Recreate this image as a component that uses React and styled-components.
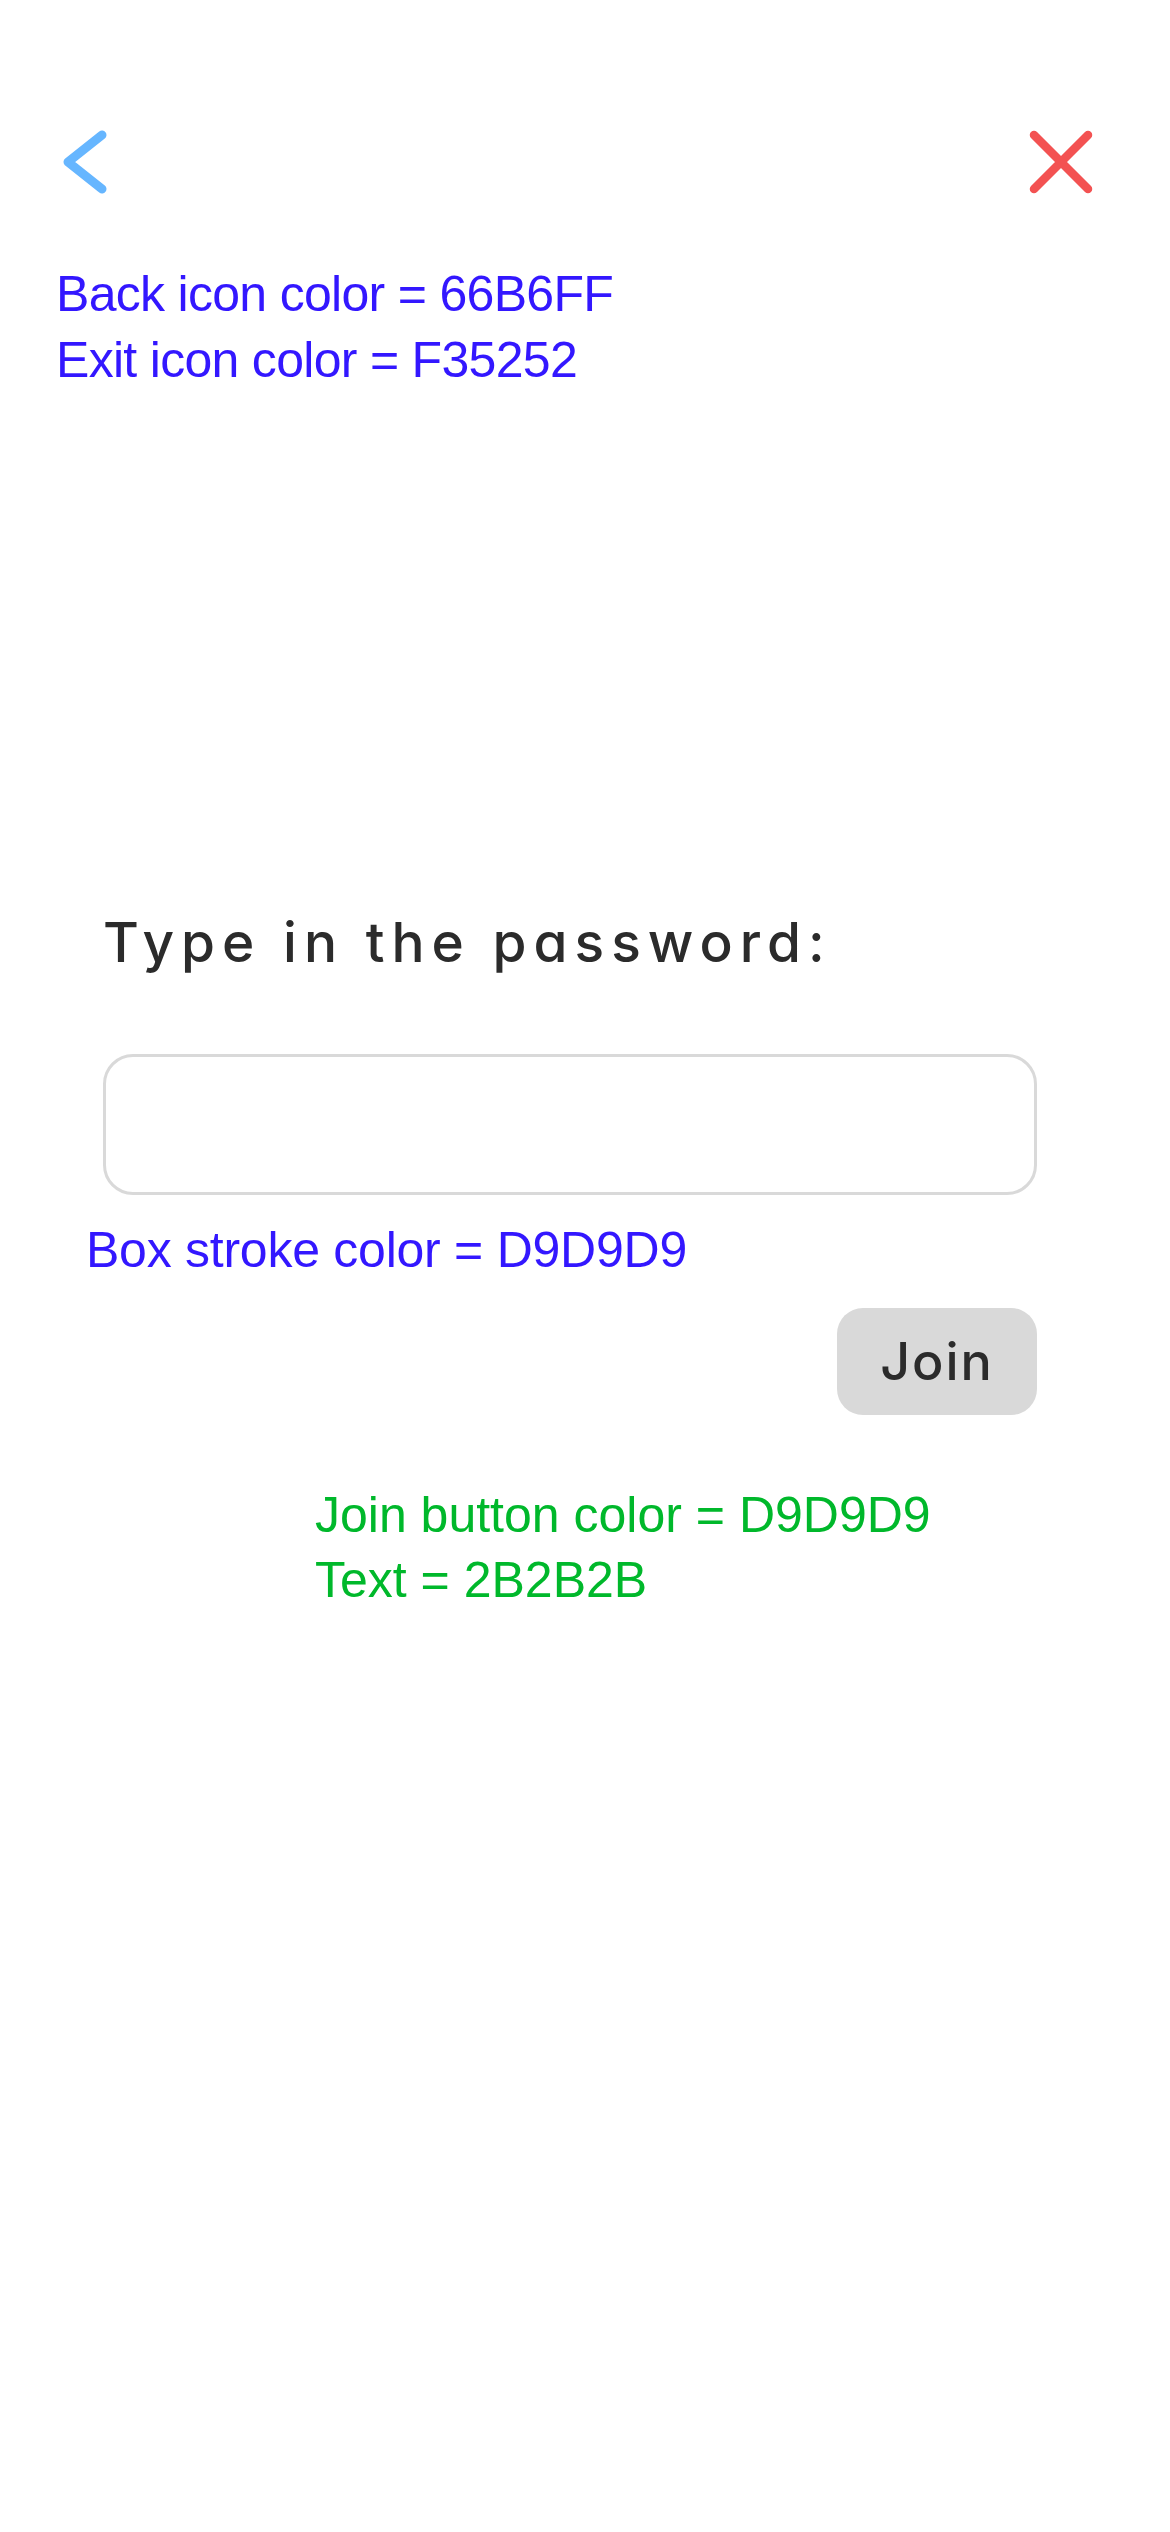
import React from "react";
import styled, { createGlobalStyle } from "styled-components";

const Global = createGlobalStyle`
  html, body { margin: 0; padding: 0; background: #ffffff; }
  body { font-family: "Liberation Sans", Arial, sans-serif; }
  * { box-sizing: border-box; }
`;

const Page = styled.div`
  width: 1170px;
  min-height: 2532px;
  background: #ffffff;
  display: flex;
  flex-direction: column;
`;

const Header = styled.header`
  display: flex;
  justify-content: space-between;
  align-items: flex-start;
  padding: 125px 69px 0 58px;
  height: 200px;
`;

const IconButton = styled.button`
  border: none;
  background: transparent;
  padding: 0;
  margin: 0;
  display: block;
  cursor: pointer;
  line-height: 0;
`;

const Note = styled.p`
  margin: ${(p) => p.$top}px 0 0 ${(p) => p.$left}px;
  font-family: "Liberation Sans", Arial, sans-serif;
  font-size: 50px;
  line-height: ${(p) => p.$lh || 66}px;
  letter-spacing: ${(p) => (p.$ls !== undefined ? p.$ls : -0.7)}px;
  color: ${(p) => p.$color};
  white-space: pre-line;
`;

const Form = styled.form`
  display: flex;
  flex-direction: column;
  margin: ${(p) => p.$top}px 0 0 103px;
  width: 934px;
`;

const Label = styled.label`
  font-family: "Inter", "DejaVu Sans", sans-serif;
  font-feature-settings: "cv11" 1;
  font-size: 55px;
  line-height: 66px;
  letter-spacing: 7px;
  color: #2b2b2b;
  font-weight: 500;
`;

const PasswordBox = styled.input`
  margin-top: 79px;
  width: 934px;
  height: 141px;
  border: 3px solid #d9d9d9;
  border-radius: 30px;
  background: #ffffff;
  outline: none;
  padding: 0 32px;
  font-size: 50px;
  color: #2b2b2b;
`;

const JoinButton = styled.button`
  align-self: flex-end;
  margin-top: ${(p) => p.$top}px;
  width: 200px;
  height: 107px;
  border: none;
  border-radius: 26px;
  background: #d9d9d9;
  color: #2b2b2b;
  font-family: "Inter", "Liberation Sans", sans-serif;
  font-size: 52px;
  font-weight: 500;
  letter-spacing: 2px;
  display: flex;
  align-items: center;
  justify-content: center;
  padding: 0;
  cursor: pointer;
`;

const BackIcon = () => (
  <svg width="56" height="75" viewBox="0 0 56 75" fill="none">
    <polyline
      points="44,10 10,37 44,64"
      stroke="#66B6FF"
      strokeWidth="9"
      strokeLinecap="round"
      strokeLinejoin="round"
    />
  </svg>
);

const ExitIcon = () => (
  <svg width="80" height="75" viewBox="0 0 80 75" fill="none">
    <path
      d="M13 10 L67 64 M67 10 L13 64"
      stroke="#F35252"
      strokeWidth="8.5"
      strokeLinecap="round"
    />
  </svg>
);

export default function App() {
  return (
    <>
      <Global />
      <Page>
        <Header>
          <IconButton aria-label="Back">
            <BackIcon />
          </IconButton>
          <IconButton aria-label="Exit">
            <ExitIcon />
          </IconButton>
        </Header>

        <Note $color="#3317FF" $left={56} $top={61}>
          {"Back icon color = 66B6FF\nExit icon color = F35252"}
        </Note>

        <Form $top={516} onSubmit={(e) => e.preventDefault()}>
          <Label htmlFor="pw">Type in the password:</Label>
          <PasswordBox id="pw" type="password" />
        </Form>

        <Note $color="#3317FF" $left={86} $top={22} $ls={-0.25}>
          Box stroke color = D9D9D9
        </Note>

        <Form $top={0} onSubmit={(e) => e.preventDefault()}>
          <JoinButton type="submit" $top={25}>Join</JoinButton>
        </Form>

        <Note $color="#00B82B" $left={315} $top={68} $lh={65} $ls={0}>
          {"Join button color = D9D9D9\nText = 2B2B2B"}
        </Note>
      </Page>
    </>
  );
}
